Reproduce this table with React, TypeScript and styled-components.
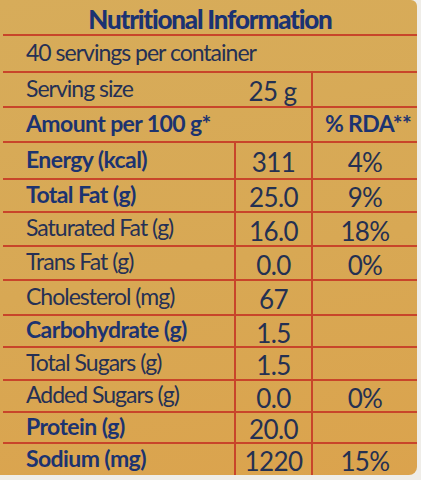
import styled, { createGlobalStyle } from "styled-components"

const GlobalStyle = createGlobalStyle`
  html, body {
    margin: 0;
    padding: 0;
    background: #efede8;
  }
  body {
    width: 421px;
    height: 480px;
  }
`

interface Nutrient {
  label: string
  value: string
  rda?: string
  bold?: boolean
  h: number
}

const nutrients: Nutrient[] = [
  { label: "Energy (kcal)", value: "311", rda: "4%", bold: true, h: 37 },
  { label: "Total Fat (g)", value: "25.0", rda: "9%", bold: true, h: 33 },
  { label: "Saturated Fat (g)", value: "16.0", rda: "18%", h: 34 },
  { label: "Trans Fat (g)", value: "0.0", rda: "0%", h: 34 },
  { label: "Cholesterol (mg)", value: "67", h: 35 },
  { label: "Carbohydrate (g)", value: "1.5", bold: true, h: 32 },
  { label: "Total Sugars (g)", value: "1.5", h: 33 },
  { label: "Added Sugars (g)", value: "0.0", rda: "0%", h: 32 },
  { label: "Protein (g)", value: "20.0", bold: true, h: 31 },
  { label: "Sodium (mg)", value: "1220", rda: "15%", bold: true, h: 31 },
]

export default function App() {
  return (
    <>
      <GlobalStyle />
      <Label>
        <Title>Nutritional Information</Title>
        <Row $h={37} $cols="1fr">
          <Name>40 servings per container</Name>
        </Row>
        <Row $h={35}>
          <Name>Serving size</Name>
          <Value>25 g</Value>
          <Value $divider />
        </Row>
        <Row $h={35} $cols="308px 1fr">
          <Name $bold>Amount per 100 g*</Name>
          <Name $bold $divider $center>% RDA**</Name>
        </Row>
        {nutrients.map((n, i) => (
          <Row key={n.label} $h={n.h} $last={i === nutrients.length - 1}>
            <Name $bold={n.bold}>{n.label}</Name>
            <Value $divider>{n.value}</Value>
            <Value $divider>{n.rda}</Value>
          </Row>
        ))}
      </Label>
    </>
  )
}

const Label = styled.div`
  width: 417px;
  box-sizing: border-box;
  padding-left: 3px;
  background: linear-gradient(170deg, #d7ac5a 0%, #d8a854 55%, #dba34d 100%);
  border-radius: 0 6px 8px 0;
  font-family: Lato, "Open Sans", sans-serif;
  color: #263154;
`

const Title = styled.div`
  height: 36px;
  box-sizing: border-box;
  border-bottom: 2px solid #c8452a;
  display: flex;
  align-items: center;
  justify-content: center;
  padding-top: 3px;
  font-size: 26px;
  line-height: 1;
  font-weight: 900;
  color: #1b3272;
  letter-spacing: -1.2px;
`

const Row = styled.div<{ $h: number; $cols?: string; $last?: boolean }>`
  display: grid;
  grid-template-columns: ${(p) => p.$cols || "231px 77px 1fr"};
  height: ${(p) => p.$h}px;
  box-sizing: border-box;
  border-bottom: ${(p) => (p.$last ? "none" : "2px solid #c8452a")};
`

const Name = styled.div<{ $bold?: boolean; $divider?: boolean; $center?: boolean }>`
  display: flex;
  align-items: center;
  justify-content: ${(p) => (p.$center ? "center" : "flex-start")};
  padding-left: ${(p) => (p.$center ? "6px" : "23px")};
  padding-bottom: 3px;
  border-left: ${(p) => (p.$divider ? "2px solid #c8452a" : "none")};
  font-size: 23px;
  line-height: 1;
  font-weight: ${(p) => (p.$bold ? 700 : 400)};
  letter-spacing: ${(p) => (p.$bold ? "-0.6px" : "-1px")};
  color: ${(p) => (p.$bold ? "#1c3370" : "#253055")};
  white-space: nowrap;
`

const Value = styled.div<{ $divider?: boolean }>`
  display: flex;
  align-items: center;
  justify-content: center;
  padding-top: 3px;
  border-left: ${(p) => (p.$divider ? "2px solid #c8452a" : "none")};
  font-size: 26px;
  line-height: 1;
  letter-spacing: -0.6px;
  color: #243052;
  white-space: nowrap;
`
